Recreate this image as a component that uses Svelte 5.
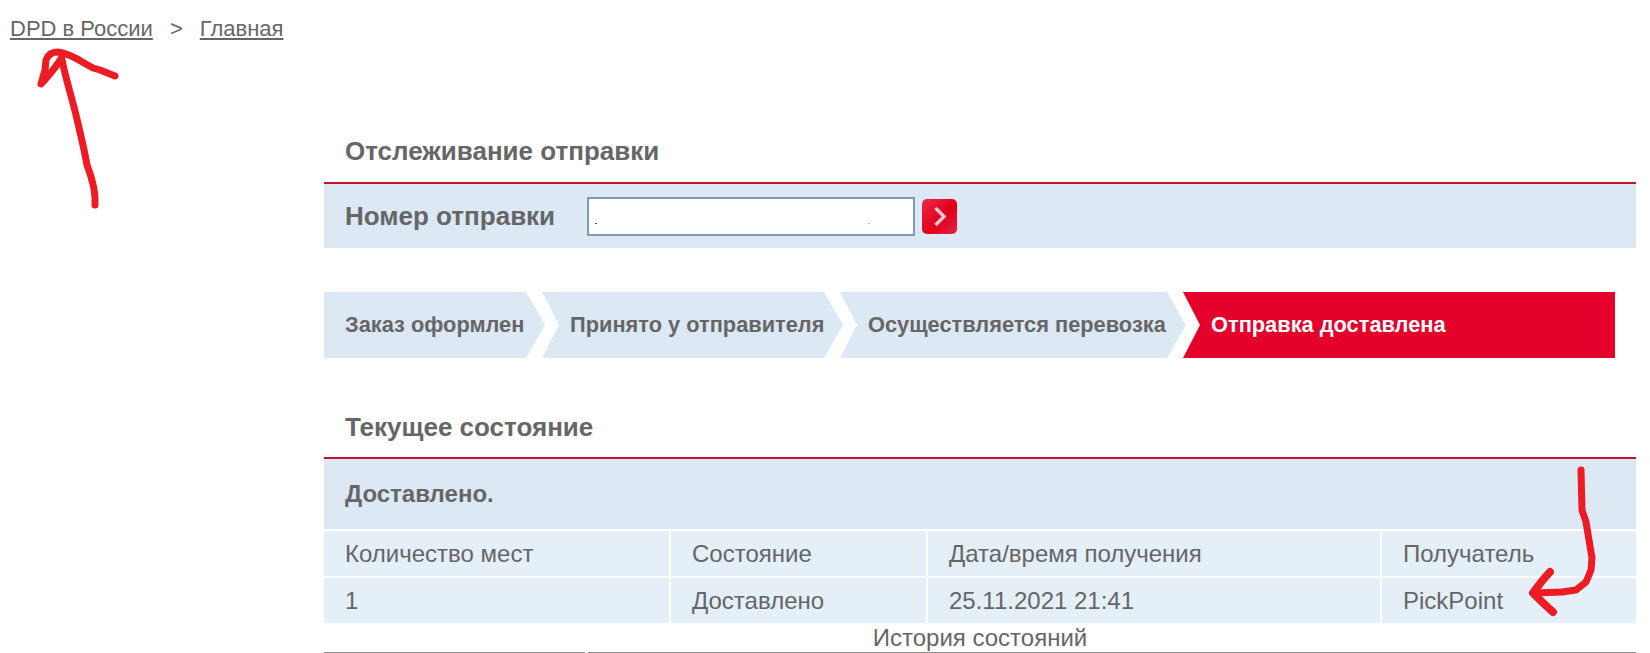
<script>
  const steps = [
    { label: "Заказ оформлен", cls: "s1" },
    { label: "Принято у отправителя", cls: "s2" },
    { label: "Осуществляется перевозка", cls: "s3" },
    { label: "Отправка доставлена", cls: "s4 active" }
  ];
  const headers = ["Количество мест", "Состояние", "Дата/время получения", "Получатель"];
  const row = ["1", "Доставлено", "25.11.2021 21:41", "PickPoint"];
</script>

<div class="page">
  <nav class="crumbs">
    <a href="#top">DPD в России</a>
    <span class="sep">&gt;</span>
    <a href="#top">Главная</a>
  </nav>

  <main class="content">
    <h2 class="title first">Отслеживание отправки</h2>
    <div class="search">
      <span class="search-label">Номер отправки</span>
      <input class="search-input" type="text" aria-label="Номер отправки" />
      <button class="go" aria-label="Найти">
        <svg width="35" height="35" viewBox="0 0 35 35">
          <path d="M13.500 9 L22 17.500 L13.500 26" fill="none" stroke="#f7c3cd" stroke-width="3.500" />
        </svg>
      </button>
    </div>

    <div class="steps">
      {#each steps as step}
        <div class="step {step.cls}">{step.label}</div>
      {/each}
    </div>

    <h2 class="title second">Текущее состояние</h2>
    <div class="status">Доставлено.</div>
    <table class="info">
      <colgroup>
        <col class="c1" /><col class="c2" /><col class="c3" /><col />
      </colgroup>
      <tbody>
        <tr>
          {#each headers as h}
            <td>{h}</td>
          {/each}
        </tr>
        <tr>
          {#each row as v}
            <td>{v}</td>
          {/each}
        </tr>
      </tbody>
    </table>
    <div class="history">История состояний</div>
    <div class="history-head"><span class="h1"></span><span class="h2"></span></div>
  </main>

  <!-- hand drawn annotations on top of the screenshot -->
  <svg class="marks" width="1650" height="653" viewBox="0 0 1650 653">
    <g fill="none" stroke="#ed1c24" stroke-width="7" stroke-linecap="round" stroke-linejoin="round">
      <path d="M95 205 C96 192 92 178 87 165 C84 148 80 132 76 115 C72 98 66 80 62 60" />
      <path d="M41 84 L45 70 L46 60 C48 54 52 52 58 52 C66 53 76 58 84 63 L93 68 L100 70 L115 76" />
      <path d="M43 82 C50 74 57 66 62 57" />
      <path d="M1581 470 L1582 510 L1586 522 L1589 540 L1592 558 L1591 570 L1586 582 L1576 590 L1562 592 L1534 593" />
      <path d="M1550 572 C1544 578 1538 586 1533 593 C1540 600 1546 606 1553 612" stroke-width="8" />
    </g>
  </svg>
</div>

<style>
  :global(body) {
    margin: 0;
    background: #fff;
  }

  .page {
    position: relative;
    width: 1650px;
    height: 653px;
    overflow: hidden;
    font-family: "Liberation Sans", Arial, sans-serif;
    color: #666;
  }

  .crumbs {
    display: flex;
    gap: 17px;
    padding: 18px 0 0 10px;
    font-size: 22px;
    line-height: 22px;
  }

  .crumbs a {
    color: #666;
  }

  .content {
    margin: 0 14px 0 324px;
    padding-top: 97px;
  }

  .title {
    margin: 0;
    padding-left: 21px;
    font-size: 26px;
    line-height: 28px;
    font-weight: bold;
    border-bottom: 2px solid #c8102e;
  }

  .title.first {
    padding-bottom: 17px;
  }

  .title.second {
    padding-bottom: 16px;
  }

  .search {
    display: flex;
    align-items: center;
    height: 64px;
    padding-left: 21px;
    background: #dce8f4;
  }

  .search-label {
    width: 242px;
    font-size: 26px;
    font-weight: bold;
  }

  .search-input {
    box-sizing: border-box;
    width: 328px;
    height: 39px;
    padding: 0;
    border: 2px solid #7f9ab5;
    background:
      linear-gradient(#444, #444) 6px 24px / 2px 1px no-repeat,
      linear-gradient(#bbb, #bbb) 279px 24px / 2px 1px no-repeat,
      #fff;
  }

  .go {
    width: 35px;
    height: 35px;
    margin-left: 7px;
    padding: 0;
    border: 0;
    border-radius: 5px;
    background: linear-gradient(135deg, #ea2a4c, #e00018 55%, #e4224a);
  }

  .go svg {
    display: block;
  }

  .steps {
    display: flex;
    width: 1291px;
    height: 66px;
    margin: 44px 0 55px;
  }

  .step {
    display: flex;
    align-items: center;
    box-sizing: border-box;
    height: 66px;
    padding-left: 28px;
    margin-left: -3px;
    background: #dce8f4;
    font-size: 21.8px;
    font-weight: bold;
    clip-path: polygon(0 0, calc(100% - 19px) 0, 100% 50%, calc(100% - 19px) 100%, 0 100%, 17px 50%);
  }

  .s1 {
    width: 221px;
    margin-left: 0;
    padding-left: 21px;
    clip-path: polygon(0 0, calc(100% - 19px) 0, 100% 50%, calc(100% - 19px) 100%, 0 100%);
  }

  .s2 {
    width: 301px;
  }

  .s3 {
    width: 346px;
  }

  .active {
    flex: 1;
    background: #e4002b;
    color: #fff;
    clip-path: polygon(0 0, 100% 0, 100% 100%, 0 100%, 17px 50%);
  }

  .status {
    height: 70px;
    padding-left: 21px;
    background: #dce8f4;
    font-size: 24px;
    line-height: 70px;
    font-weight: bold;
  }

  .info {
    width: 100%;
    margin-top: 2px;
    table-layout: fixed;
    border-collapse: collapse;
    font-size: 24px;
  }

  .c1 {
    width: 346px;
  }

  .c2 {
    width: 257px;
  }

  .c3 {
    width: 454px;
  }

  .info td {
    height: 45px;
    padding: 0 0 0 21px;
    background: #e4eff8;
    border-top: 2px solid #fff;
    border-left: 2px solid #fff;
  }

  .info td:first-child {
    border-left: 0;
  }

  .info tr:first-child td {
    border-top: 0;
  }

  .history {
    height: 29px;
    font-size: 24px;
    line-height: 29px;
    text-align: center;
  }

  .history-head {
    display: flex;
    gap: 3px;
  }

  .history-head span {
    height: 1px;
    background: #8c8c8c;
  }

  .h1 {
    width: 261px;
  }

  .h2 {
    flex: 1;
  }

  .marks {
    position: absolute;
    top: 0;
    left: 0;
    pointer-events: none;
  }
</style>
